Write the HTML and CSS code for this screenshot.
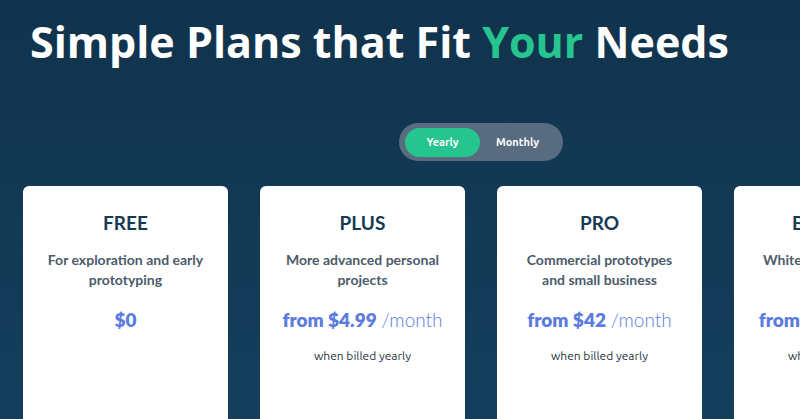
FILE: index.html
```html
<!DOCTYPE html>
<html lang="en">
<head>
    <meta charset="UTF-8">
    <meta name="viewport" content="width=device-width, initial-scale=1.0">
    <title>Pricing</title>
    <link rel="stylesheet" href="styles.css">
</head>
<body>

<div class="page">
    <h1 class="title">Simple Plans that Fit <span class="accent">Your</span> Needs</h1>

    <div class="toggle-row">
        <div class="toggle">
            <button class="toggle-btn active">Yearly</button>
            <button class="toggle-btn">Monthly</button>
        </div>
    </div>

    <div class="plans">
        <div class="plan">
            <h2>FREE</h2>
            <p class="plan-desc">For exploration and early prototyping</p>
            <div class="price"><strong>$0</strong></div>
        </div>

        <div class="plan">
            <h2>PLUS</h2>
            <p class="plan-desc">More advanced personal projects</p>
            <div class="price"><strong>from $4.99</strong> <span>/month</span></div>
            <div class="billed">when billed yearly</div>
        </div>

        <div class="plan">
            <h2>PRO</h2>
            <p class="plan-desc">Commercial prototypes and small business</p>
            <div class="price"><strong>from $42</strong> <span>/month</span></div>
            <div class="billed">when billed yearly</div>
        </div>

        <div class="plan">
            <h2>BUSINESS</h2>
            <p class="plan-desc">White label and custom your brand</p>
            <div class="price"><strong>from $199</strong> <span>/month</span></div>
            <div class="billed">when billed yearly</div>
        </div>
    </div>
</div>

</body>
</html>
```

FILE: styles.css
```css
/* Page */
body {
    margin: 0;
    height: 100vh;
    overflow: hidden;
    background: linear-gradient(180deg, #11334d 0%, #143f5c 100%);
    font-family: Lato, "Open Sans", sans-serif;
    color: #ffffff;
}

.page {
    padding-top: 20px;
}

/* Heading */
.title {
    margin: 0 0 0 30px;
    font-family: "Open Sans", Lato, sans-serif;
    font-size: 43px;
    line-height: 1;
    font-weight: 700;
    white-space: nowrap;
}

.accent {
    color: #26c48e;
}

/* Billing toggle */
.toggle-row {
    padding: 60px 0 0 399px;
}

.toggle {
    display: inline-flex;
    align-items: center;
    width: 164px;
    height: 38px;
    box-sizing: border-box;
    padding: 0 6px;
    border-radius: 19px;
    background: #596b7e;
}

.toggle-btn {
    width: 75px;
    height: 29px;
    border: none;
    border-radius: 15px;
    background: transparent;
    color: #ffffff;
    font-family: Ubuntu, "Open Sans", sans-serif;
    font-size: 11px;
    font-weight: 700;
    padding: 0;
}

.toggle-btn.active {
    background: #26c48e;
}

/* Plan cards */
.plans {
    display: flex;
    gap: 32px;
    padding: 25px 0 0 23px;
}

.plan {
    flex: 0 0 205px;
    height: 260px;
    box-sizing: border-box;
    padding: 25px 18px 0;
    background: #ffffff;
    border-radius: 6px;
    text-align: center;
    color: #163a55;
}

.plan h2 {
    margin: 0;
    font-size: 19px;
    line-height: 24px;
    font-weight: 700;
}

.plan-desc {
    margin: 15px 0 0;
    font-size: 14px;
    line-height: 20px;
    font-weight: 700;
    color: #4b5b6b;
}

.price {
    margin-top: 18px;
    font-size: 19px;
    line-height: 24px;
    color: #5b7be0;
    white-space: nowrap;
}

.price strong {
    font-weight: 800;
}

.price span {
    font-weight: 300;
}

.billed {
    margin-top: 17px;
    font-family: Ubuntu, "Open Sans", sans-serif;
    font-size: 12px;
    color: #24313d;
}
```
